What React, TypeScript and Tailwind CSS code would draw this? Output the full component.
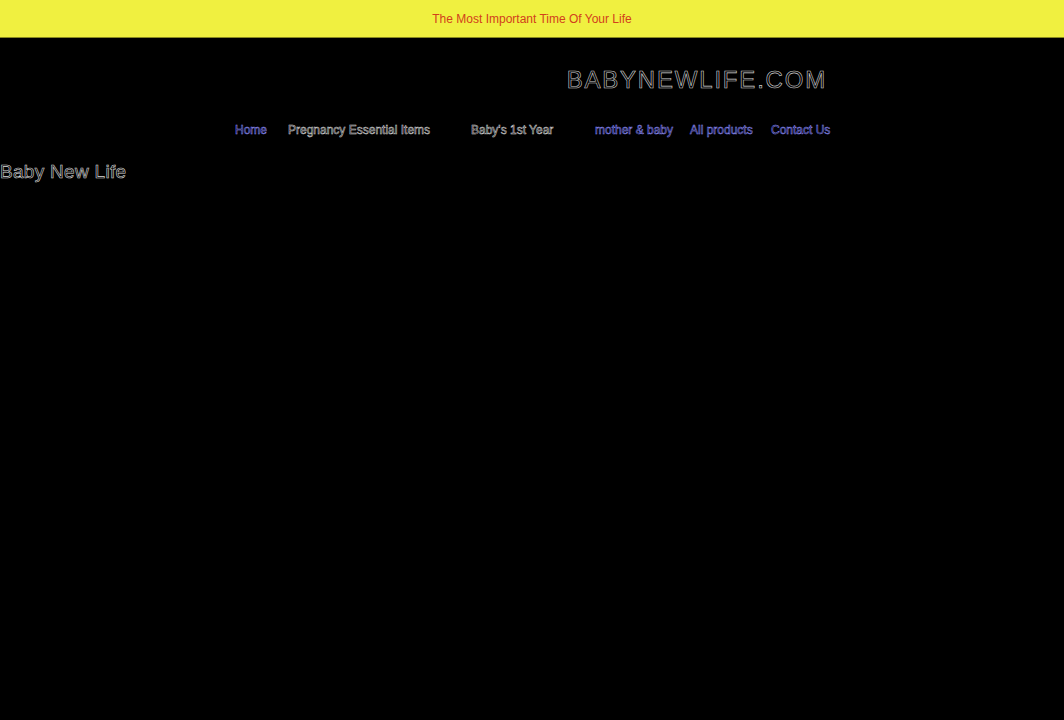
import React from 'react';

const NAV = [
  { label: 'Home', stroke: '[-webkit-text-stroke:0.5px_#8f8fff]', width: 'w-[53px]' },
  { label: 'Pregnancy Essential Items', stroke: '[-webkit-text-stroke:0.5px_#dadada]', width: 'w-[183px]' },
  { label: "Baby's 1st Year", stroke: '[-webkit-text-stroke:0.5px_#dadada]', width: 'w-[124px]' },
  { label: 'mother & baby', stroke: '[-webkit-text-stroke:0.5px_#8f8fff]', width: 'w-[95px]' },
  { label: 'All products', stroke: '[-webkit-text-stroke:0.5px_#8f8fff]', width: 'w-[81px]' },
  { label: 'Contact Us', stroke: '[-webkit-text-stroke:0.5px_#8f8fff]', width: 'w-auto' },
];

export default function App() {
  return (
    <div className="min-h-[720px] bg-black font-['Liberation_Sans',Arial,sans-serif]">
      {/* Announcement bar */}
      <div className="h-[38px] bg-[#f0f040] border-b border-[#8a8a20] flex items-center justify-center">
        <p className="text-[12px] text-[#d2401c]">The Most Important Time Of Your Life</p>
      </div>

      {/* Logo */}
      <div className="flex justify-end pr-[237px] pt-[27px]">
        <h1 className="text-[24px] leading-[30px] tracking-[1.8px] text-transparent [-webkit-text-stroke:0.6px_#d0d0d0]">
          BABYNEWLIFE.COM
        </h1>
      </div>

      {/* Main navigation */}
      <nav className="flex pl-[235px] pt-[28px]">
        {NAV.map((item) => (
          <a
            key={item.label}
            href="#"
            className={`${item.width} text-[12px] leading-[14px] text-transparent ${item.stroke}`}
          >
            {item.label}
          </a>
        ))}
      </nav>

      {/* Site title */}
      <h2 className="mt-[24px] text-[19px] leading-[22px] tracking-[0.3px] text-transparent [-webkit-text-stroke:0.6px_#d8d8d8]">
        Baby New Life
      </h2>
    </div>
  );
}
